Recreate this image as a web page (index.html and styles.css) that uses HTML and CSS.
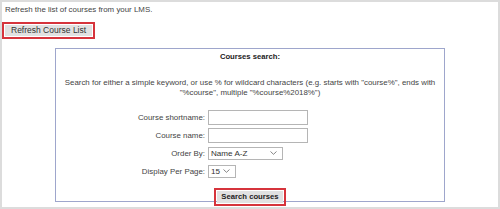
FILE: index.html
```html
<!DOCTYPE html>
<html>
<head>
<meta charset="UTF-8">
<title>Refresh Course List</title>
<link rel="stylesheet" href="styles.css">
</head>
<body>
  <div class="frame">
    <p class="intro">Refresh the list of courses from your LMS.</p>
    <button class="btn marked">Refresh Course List</button>

    <div class="search-box">
      <h3>Courses search:</h3>
      <p class="hint">Search for either a simple keyword, or use % for wildcard characters (e.g. starts with "course%", ends with "%course", multiple "%course%2018%")</p>

      <div class="search-form">
        <label>Course shortname:</label>
        <input type="text">

        <label>Course name:</label>
        <input type="text">

        <label>Order By:</label>
        <select class="order">
          <option>Name A-Z</option>
          <option>Name Z-A</option>
        </select>

        <label>Display Per Page:</label>
        <select class="per-page">
          <option>15</option>
          <option>30</option>
          <option>50</option>
        </select>
      </div>

      <div class="actions">
        <button class="btn bold marked">Search courses</button>
      </div>
    </div>
  </div>
</body>
</html>
```

FILE: styles.css
```css
html, body {
  margin: 0;
  padding: 0;
  background: #fff;
}
body {
  font-family: "Liberation Sans", Arial, sans-serif;
  font-size: 7.9px;
  color: #444;
}
.frame {
  height: 209px;
  box-sizing: border-box;
  border: 2px solid #dcdcdc;
  padding: 3px 3px 0 3px;
}
.intro {
  margin: 0;
  line-height: 10px;
}
.btn {
  font-family: "Liberation Sans", Arial, sans-serif;
  font-size: 8.5px;
  color: #333;
  background: #e1e1e1;
  border: none;
  padding: 0 6px;
  height: 11px;
  line-height: 11px;
  cursor: pointer;
}
.btn.bold {
  font-size: 7.7px;
  font-weight: bold;
  color: #222;
  padding: 0 4px;
  height: 12px;
  line-height: 12px;
}
.marked {
  outline: 2px solid #d6343c;
  outline-offset: 1px;
}
.frame > .btn {
  margin: 10px 0 0 0;
  display: block;
}

/* search panel */
.search-box {
  width: 390px;
  height: 153px;
  box-sizing: border-box;
  margin: 12px auto 0;
  padding-top: 3px;
  border: 1px solid #9ea6cc;
  border-bottom: none;
  box-shadow: 0 1px 0 #9ea6cc;
  text-align: center;
}
.search-box h3 {
  margin: 0;
  font-size: 7.7px;
  line-height: 10px;
  color: #222;
}
.hint {
  margin: 16px 6px 0;
  line-height: 10px;
}
.search-form {
  display: grid;
  grid-template-columns: 149px auto;
  grid-auto-rows: 18px;
  column-gap: 3px;
  align-items: center;
  justify-items: start;
  margin-top: 10px;
}
.search-form label {
  justify-self: end;
}
.search-form input {
  width: 100px;
  height: 15px;
  box-sizing: border-box;
  border: 1px solid #b5b5b5;
  margin: 0;
}
.search-form select {
  -webkit-appearance: none;
  appearance: none;
  font-family: "Liberation Sans", Arial, sans-serif;
  font-size: 8.1px;
  color: #333;
  height: 13px;
  box-sizing: border-box;
  border: 1px solid #b5b5b5;
  padding: 0 0 0 2px;
  margin: 0;
  background: #fff url("data:image/svg+xml;utf8,<svg xmlns='http://www.w3.org/2000/svg' width='7' height='4' viewBox='0 0 7 4'><path d='M0.5 0.5 L3.5 3.3 L6.5 0.5' fill='none' stroke='%23666' stroke-width='0.8'/></svg>") no-repeat right 5px center;
}
.search-form .order {
  width: 75px;
}
.search-form .per-page {
  width: 28px;
}
.actions {
  margin-top: 11px;
}
```
